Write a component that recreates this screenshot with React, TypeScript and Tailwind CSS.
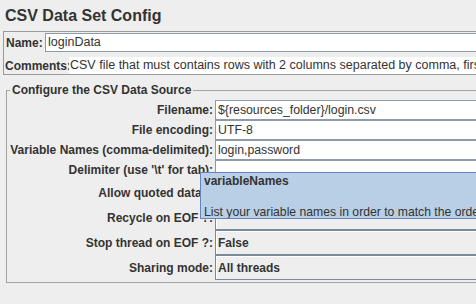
import React from "react";

const textRows = [
  { label: "Filename:", value: "${resources_folder}/login.csv" },
  { label: "File encoding:", value: "UTF-8" },
  { label: "Variable Names (comma-delimited):", value: "login,password" },
  { label: "Delimiter (use '\\t' for tab):", value: "" },
];

// Allow quoted data / Recycle values sit under the tooltip, so they stay blank
const comboRows = [
  { label: "Allow quoted data?:", value: "" },
  { label: "Recycle on EOF ?:", value: "" },
  { label: "Stop thread on EOF ?:", value: "False" },
  { label: "Sharing mode:", value: "All threads" },
];

export default function App() {
  return (
    <div className="relative w-[476px] h-[304px] overflow-hidden bg-[#eeeeee] text-[#333333] text-[12px] font-['Liberation_Sans',Arial,sans-serif]">
      <div className="w-[720px]">
        {/* Title */}
        <h1 className="h-[31px] flex items-center pl-[5px] text-[16px] font-bold leading-none">
          CSV Data Set Config
        </h1>

        {/* Name / Comments panel */}
        <div className="ml-[3px] h-[44px] border border-[#9a9a9a]">
          <div className="flex items-center mt-[1px] h-[19px]">
            <span className="w-[41px] pl-[2px] font-bold">Name:</span>
            <div className="flex-1 h-[19px] flex items-center pl-[2px] text-[12.5px] bg-white border border-[#8e9aaa]">
              loginData
            </div>
          </div>
          <div className="flex items-center mt-[5px] h-[17px]">
            <span className="w-[65px] pl-[1px] font-bold">Comments:</span>
            <div className="flex-1 h-[17px] flex items-center pl-[1px] text-[12.5px] bg-white whitespace-nowrap">
              CSV file that must contains rows with 2 columns separated by comma, first is login, second is password
            </div>
          </div>
        </div>

        {/* Configure the CSV Data Source */}
        <fieldset className="mt-[8px] ml-[6px] border border-[#a3a3a3] pl-[3px] pr-[3px] pt-[3px] pb-[2px]">
          <legend className="px-[2px] font-bold leading-[14px]">Configure the CSV Data Source</legend>
          <div className="grid grid-cols-[205px_1fr]">
            {textRows.map((r) => (
              <React.Fragment key={r.label}>
                <div className="h-[20px] flex items-center justify-end pr-[2px] font-bold whitespace-nowrap">
                  {r.label}
                </div>
                <div className="h-[20px] flex items-center pl-[2px] text-[12.3px] bg-white border border-[#8e9aaa] whitespace-nowrap">
                  {r.value}
                </div>
              </React.Fragment>
            ))}
            {comboRows.map((r) => (
              <React.Fragment key={r.label}>
                <div className="h-[25px] flex items-center justify-end pr-[2px] font-bold whitespace-nowrap">
                  {r.label}
                </div>
                <div className="h-[25px] flex items-center pl-[2px] font-bold bg-[#eeeeee] border border-[#7a8a99] shadow-[inset_1px_1px_0_#ffffff]">
                  {r.value}
                </div>
              </React.Fragment>
            ))}
          </div>
        </fieldset>
      </div>

      {/* Tooltip */}
      <div className="absolute left-[200px] top-[172px] h-[47px] w-[420px] overflow-hidden px-[3px] pt-[1px] bg-[#b8cfe5] border border-[#6382bf] leading-[15px] whitespace-nowrap">
        <div className="font-bold">variableNames</div>
        <div className="h-[16px]" />
        <div className="text-[12.2px]">List your variable names in order to match the order of columns in your csv data.</div>
      </div>
    </div>
  );
}
